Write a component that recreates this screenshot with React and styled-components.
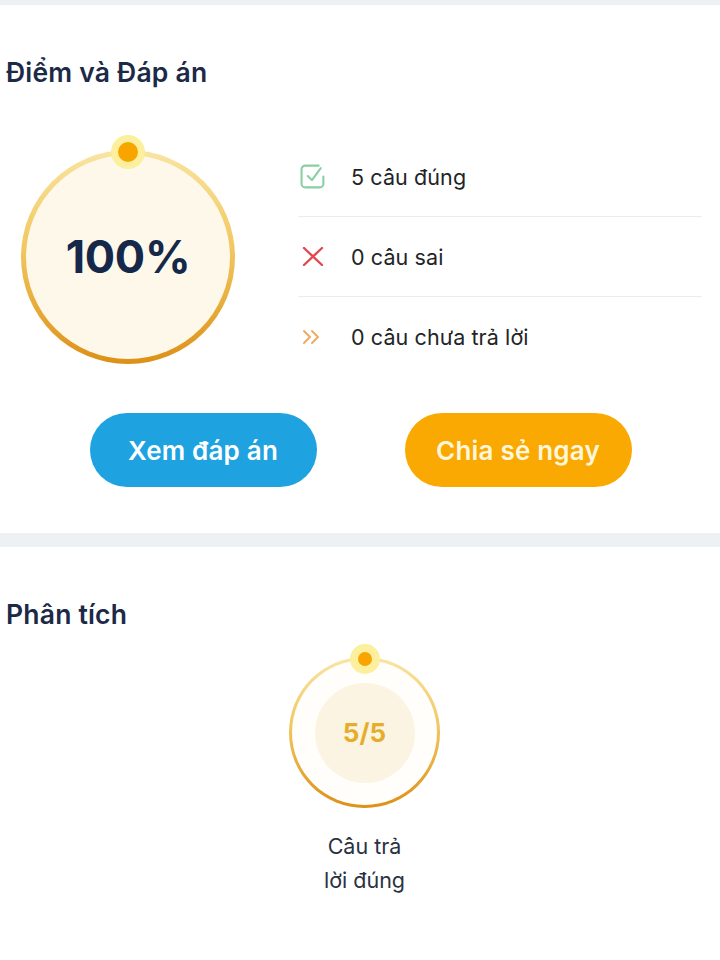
import React from "react";
import styled, { createGlobalStyle } from "styled-components";

const GlobalStyle = createGlobalStyle`
  body {
    margin: 0;
    background: #ffffff;
    font-family: Inter, "Noto Sans", "Liberation Sans", sans-serif;
    -webkit-font-smoothing: antialiased;
  }
`;

const Page = styled.div`
  width: 720px;
  min-height: 960px;
  background: #ffffff;
  display: flex;
  flex-direction: column;
`;

const Band = styled.div`
  height: ${(props) => props.$h}px;
  background: #eef1f3;
`;

const Section = styled.section`
  display: flex;
  flex-direction: column;
  padding: ${(props) => props.$pad};
`;

const Title = styled.h2`
  margin: 0;
  font-size: 26.5px;
  line-height: 30px;
  font-weight: 600;
  color: #1c2a48;
  letter-spacing: 0.2px;
`;

const ScoreRow = styled.div`
  display: flex;
  align-items: center;
  margin: 50px 0 0 15px;
`;

const Gauge = styled.div`
  position: relative;
  flex: none;
  width: ${(props) => props.$size}px;
  height: ${(props) => props.$size}px;
  box-sizing: border-box;
  border-radius: 50%;
  border: ${(props) => props.$ring}px solid transparent;
  background: linear-gradient(${(props) => props.$fill}, ${(props) => props.$fill}) padding-box,
    linear-gradient(180deg, #f9e4a2 0%, #f1c861 45%, #dd9016 100%) border-box;
  display: flex;
  align-items: center;
  justify-content: center;
`;

const Knob = styled.span`
  position: absolute;
  top: ${(props) => -props.$r - props.$ring / 2}px;
  left: 50%;
  width: ${(props) => props.$r * 2}px;
  height: ${(props) => props.$r * 2}px;
  margin-left: ${(props) => -props.$r}px;
  box-sizing: border-box;
  border-radius: 50%;
  background: #f8a500;
  border: ${(props) => props.$halo}px solid #fcef9e;
`;

const Percent = styled.span`
  font-size: 45px;
  font-weight: 700;
  color: #15284a;
  letter-spacing: -0.3px;
`;

const List = styled.ul`
  list-style: none;
  margin: 0 0 0 63px;
  padding: 0;
  width: 404px;
`;

const Item = styled.li`
  display: flex;
  align-items: center;
  height: 79px;
  border-top: ${(props) => (props.$first ? "none" : "1px solid #ececec")};
`;

const IconCell = styled.span`
  width: 53px;
  padding-left: 2px;
  box-sizing: border-box;
  display: flex;
  align-items: center;
`;

const ItemText = styled.span`
  font-size: 21.5px;
  color: #222427;
  letter-spacing: 0.1px;
`;

const Buttons = styled.div`
  display: flex;
  justify-content: center;
  gap: 88px;
  margin-top: 37px;
  padding-right: 5px;
`;

const Pill = styled.button`
  width: 227px;
  height: 74px;
  border: none;
  border-radius: 37px;
  background: ${(props) => props.$bg};
  color: ${(props) => props.$fg};
  font-family: inherit;
  font-size: 26px;
  font-weight: 600;
  letter-spacing: 0.2px;
  cursor: pointer;
`;

const Analysis = styled.div`
  display: flex;
  flex-direction: column;
  align-items: center;
  margin: 28px 0 0 3px;
`;

const InnerDisk = styled.div`
  width: 100px;
  height: 100px;
  border-radius: 50%;
  background: #fcf4e2;
  display: flex;
  align-items: center;
  justify-content: center;
  font-size: 26px;
  font-weight: 700;
  color: #e5ae2a;
`;

const Caption = styled.div`
  margin-top: 21px;
  width: 92px;
  text-align: center;
  font-size: 21.5px;
  line-height: 34px;
  color: #2a3242;
`;

const CheckIcon = () => (
  <svg width="27" height="25" viewBox="0 0 26 24" fill="none">
    <path
      d="M18 1.5H5A3.5 3.5 0 0 0 1.5 5v14A3.5 3.5 0 0 0 5 22.5h14a3.5 3.5 0 0 0 3.5-3.5v-7"
      stroke="#86d0a4"
      strokeWidth="2"
      strokeLinecap="round"
    />
    <path
      d="M7.5 11.5l4 4L20 4"
      stroke="#86d0a4"
      strokeWidth="2"
      strokeLinecap="round"
      strokeLinejoin="round"
    />
  </svg>
);

const CrossIcon = () => (
  <svg width="26" height="19" viewBox="0 0 26 19" fill="none">
    <path
      d="M4 1l18 17M22 1L4 18"
      stroke="#e04a4f"
      strokeWidth="2.4"
      strokeLinecap="round"
    />
  </svg>
);

const SkipIcon = () => (
  <svg width="26" height="16" viewBox="0 0 26 16" fill="none">
    <path
      d="M4 2l6 6-6 6M12 2l6 6-6 6"
      stroke="#f0a961"
      strokeWidth="1.9"
      strokeLinecap="round"
      strokeLinejoin="round"
    />
  </svg>
);

const results = [
  { icon: <CheckIcon />, text: "5 câu đúng" },
  { icon: <CrossIcon />, text: "0 câu sai" },
  { icon: <SkipIcon />, text: "0 câu chưa trả lời" },
];

export default function App() {
  return (
    <Page>
      <GlobalStyle />
      <Band $h={5} />
      <Section $pad="52px 0 46px 6px">
        <Title>Điểm và Đáp án</Title>
        <ScoreRow>
          <Gauge $size={214} $ring={5} $fill="#fdf8e9">
            <Knob $r={17} $halo={7} $ring={5} />
            <Percent>100%</Percent>
          </Gauge>
          <List>
            {results.map((r, i) => (
              <Item key={r.text} $first={i === 0}>
                <IconCell>{r.icon}</IconCell>
                <ItemText>{r.text}</ItemText>
              </Item>
            ))}
          </List>
        </ScoreRow>
        <Buttons>
          <Pill $bg="#1ea2e0" $fg="#ffffff">Xem đáp án</Pill>
          <Pill $bg="#f9a902" $fg="#fff6dc">Chia sẻ ngay</Pill>
        </Buttons>
      </Section>
      <Band $h={14} />
      <Section $pad="52px 0 40px 6px">
        <Title>Phân tích</Title>
        <Analysis>
          <Gauge $size={151} $ring={3} $fill="#fffefb">
            <Knob $r={15} $halo={8} $ring={3} />
            <InnerDisk>5/5</InnerDisk>
          </Gauge>
          <Caption>Câu trả lời đúng</Caption>
        </Analysis>
      </Section>
    </Page>
  );
}
